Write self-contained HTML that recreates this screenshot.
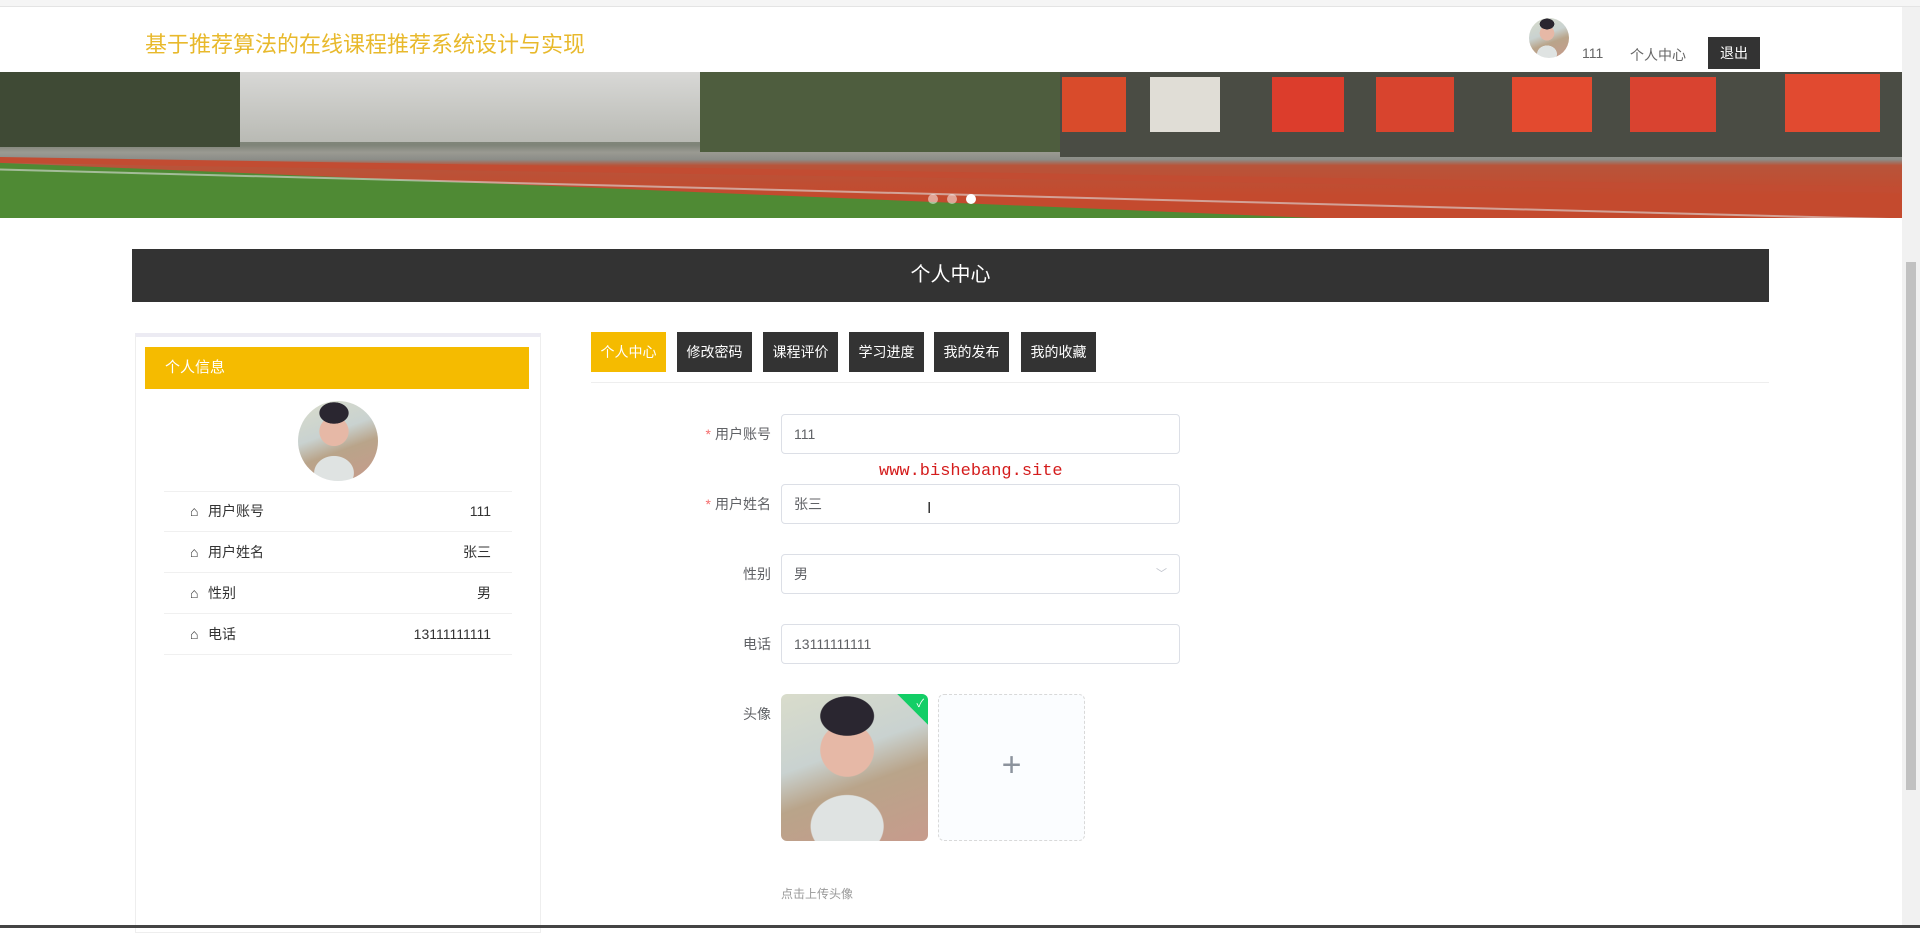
<!DOCTYPE html>
<html><head><meta charset="utf-8"><style>
*{margin:0;padding:0;box-sizing:border-box}
body{width:1920px;height:928px;overflow:hidden;background:#fff;font-family:"Liberation Sans","Noto Sans CJK SC",sans-serif;position:relative;color:#606266}
.a{position:absolute}
.photo{background:radial-gradient(ellipse 30% 22% at 45% 15%,#2a2630 60%,transparent 62%),radial-gradient(ellipse 30% 30% at 45% 38%,#e6b8a6 60%,transparent 62%),radial-gradient(ellipse 35% 30% at 45% 90%,#dfe3e2 70%,transparent 72%),linear-gradient(160deg,#d9dccb 0%,#c9d2d0 40%,#b9a48a 60%,#c79b8c 100%)}
.row{position:absolute;left:164px;width:348px;height:41px;border-bottom:1px solid #f0f0f0;font-size:14px;color:#333;line-height:40px}
.row .ic{position:absolute;left:26px}
.row .t{position:absolute;left:44px}
.row .v{position:absolute;right:21px}
.tab{position:absolute;top:332px;height:40px;width:75px;background:#333;color:#fff;font-size:14px;line-height:40px;text-align:center}
.lbl{position:absolute;width:200px;left:571px;text-align:right;font-size:14px;color:#606266}
.lbl i{color:#f56c6c;font-style:normal;margin-right:4px}
.inp{position:absolute;left:781px;width:399px;height:40px;border:1px solid #dcdfe6;border-radius:4px;font-size:14px;line-height:38px;padding-left:12px;color:#606266}
</style></head><body>
<div class="a" style="left:0;top:0;width:1920px;height:7px;background:#f5f5f5;border-bottom:1px solid #e4e4e4"></div>
<div class="a" style="left:145px;top:27px;font-size:22px;color:#e8b92c">基于推荐算法的在线课程推荐系统设计与实现</div>
<div class="a photo" style="left:1529px;top:18px;width:40px;height:40px;border-radius:50%"></div>
<div class="a" style="left:1582px;top:45px;font-size:14px;color:#666">111</div>
<div class="a" style="left:1630px;top:45px;font-size:14px;color:#666">个人中心</div>
<div class="a" style="left:1708px;top:37px;width:52px;height:32px;background:#333;color:#fff;font-size:14px;line-height:32px;text-align:center">退出</div>
<!-- banner -->
<div class="a" style="left:0;top:72px;width:1902px;height:146px;overflow:hidden;background:linear-gradient(180deg,#5b6a4e 0%,#8c9488 30%,#7f8478 50%,#9a9a92 55%,#8b8d88 60%,#b8543a 64%,#c44a2e 85%,#c44a2e 100%)">
 <div class="a" style="left:240px;top:0;width:460px;height:70px;background:linear-gradient(180deg,#d8d8d6,#b9bab4)"></div>
 <div class="a" style="left:0;top:0;width:240px;height:75px;background:#3f4a35"></div>
 <div class="a" style="left:700px;top:0;width:360px;height:80px;background:#4e5d3e"></div>
 <div class="a" style="left:1060px;top:0;width:842px;height:85px;background:#4a4c44"></div>
 <div class="a" style="left:1062px;top:5px;width:64px;height:55px;background:#d94b2b"></div>
 <div class="a" style="left:1150px;top:5px;width:70px;height:55px;background:#e0ddd6"></div>
 <div class="a" style="left:1272px;top:5px;width:72px;height:55px;background:#dc3d2c"></div>
 <div class="a" style="left:1376px;top:5px;width:78px;height:55px;background:#d8442e"></div>
 <div class="a" style="left:1512px;top:5px;width:80px;height:55px;background:#e34a2f"></div>
 <div class="a" style="left:1630px;top:5px;width:86px;height:55px;background:#d94330"></div>
 <div class="a" style="left:1785px;top:2px;width:95px;height:58px;background:#e14a30"></div>
 <div class="a" style="left:0;top:85px;width:1902px;height:6px;background:#c24c32;transform:rotate(0.9deg);transform-origin:0 0"></div>
 <div class="a" style="left:-20px;top:90px;width:1400px;height:120px;background:#4f8a34;transform:rotate(2.4deg);transform-origin:0 0"></div>
 <div class="a" style="left:-20px;top:96px;width:2100px;height:2px;background:#ddd;transform:rotate(1.5deg);transform-origin:0 0;opacity:.6"></div>
</div>
<div class="a" style="left:928px;top:194px;width:10px;height:10px;border-radius:50%;background:rgba(255,255,255,.5)"></div>
<div class="a" style="left:947px;top:194px;width:10px;height:10px;border-radius:50%;background:rgba(255,255,255,.5)"></div>
<div class="a" style="left:966px;top:194px;width:10px;height:10px;border-radius:50%;background:#fff"></div>
<!-- scrollbar -->
<div class="a" style="left:1902px;top:7px;width:18px;height:921px;background:#f1f1f1"></div>
<div class="a" style="left:1906px;top:262px;width:10px;height:528px;background:#c1c1c1"></div>
<!-- title bar -->
<div class="a" style="left:132px;top:249px;width:1637px;height:53px;background:#333;color:#fff;font-size:20px;line-height:53px;text-align:center">个人中心</div>
<!-- left card -->
<div class="a" style="left:135px;top:333px;width:406px;height:600px;border:1px solid #eee;border-top:4px solid #ecebf3"></div>
<div class="a" style="left:145px;top:347px;width:384px;height:42px;background:#f5bb00;color:#fff;font-size:15px;line-height:42px;padding-left:20px">个人信息</div>
<div class="a photo" style="left:298px;top:401px;width:80px;height:80px;border-radius:50%"></div>
<div class="a" style="left:164px;top:491px;width:348px;height:1px;background:#f0f0f0"></div>
<div class="row" style="top:491px"><span class="ic">⌂</span><span class="t">用户账号</span><span class="v">111</span></div>
<div class="row" style="top:532px"><span class="ic">⌂</span><span class="t">用户姓名</span><span class="v">张三</span></div>
<div class="row" style="top:573px"><span class="ic">⌂</span><span class="t">性别</span><span class="v">男</span></div>
<div class="row" style="top:614px"><span class="ic">⌂</span><span class="t">电话</span><span class="v">13111111111</span></div>
<!-- tabs -->
<div class="tab" style="left:591px;background:#f5bb00">个人中心</div>
<div class="tab" style="left:677px">修改密码</div>
<div class="tab" style="left:763px">课程评价</div>
<div class="tab" style="left:849px">学习进度</div>
<div class="tab" style="left:934px">我的发布</div>
<div class="tab" style="left:1021px">我的收藏</div>
<div class="a" style="left:591px;top:382px;width:1178px;height:1px;background:#eee"></div>
<!-- form -->
<div class="lbl" style="top:424px"><i>*</i>用户账号</div>
<div class="inp" style="top:414px">111</div>
<div class="a" style="left:879px;top:462px;font-family:'Liberation Mono',monospace;font-size:17px;color:#d41c1c">www.bishebang.site</div>
<div class="lbl" style="top:494px"><i>*</i>用户姓名</div>
<div class="inp" style="top:484px">张三</div>
<div class="a" style="left:927px;top:500px;font-size:16px;color:#333">I</div>
<div class="lbl" style="top:564px">性别</div>
<div class="inp" style="top:554px">男<span style="position:absolute;right:12px;color:#c0c4cc;font-size:11px">﹀</span></div>
<div class="lbl" style="top:634px">电话</div>
<div class="inp" style="top:624px">13111111111</div>
<div class="lbl" style="top:704px">头像</div>
<div class="a photo" style="left:781px;top:694px;width:147px;height:147px;border-radius:6px;overflow:hidden">
 <div class="a" style="right:-20px;top:-8px;width:50px;height:28px;background:#13ce66;transform:rotate(45deg)"></div>
 <div class="a" style="right:4px;top:1px;color:#fff;font-size:11px">✓</div>
</div>
<div class="a" style="left:938px;top:694px;width:147px;height:147px;border:1px dashed #d9d9d9;border-radius:6px;background:#fbfdff;color:#8c939d;font-size:34px;line-height:140px;text-align:center;font-weight:300">+</div>
<div class="a" style="left:781px;top:885px;font-size:12px;color:#999">点击上传头像</div>
<div class="a" style="left:0;top:925px;width:1920px;height:3px;background:#444"></div>
</body></html>
